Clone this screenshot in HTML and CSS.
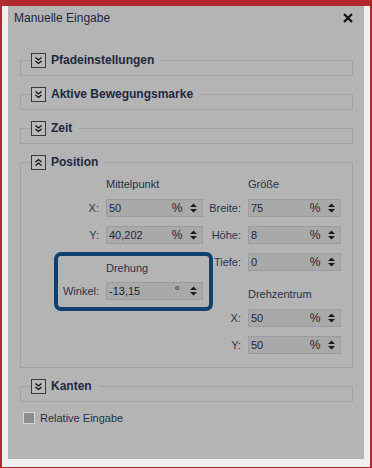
FILE: index.html
```html
<!DOCTYPE html>
<html lang="de">
<head>
<meta charset="utf-8">
<title>Manuelle Eingabe</title>
<link rel="stylesheet" href="styles.css">
</head>
<body>
<div class="window">
  <div class="panel">
    <div class="titlebar">
      <span class="title">Manuelle Eingabe</span>
      <svg class="close" width="10" height="10" viewBox="0 0 10 10"><path d="M1 1L9 9M9 1L1 9" stroke="#111" stroke-width="2.2" fill="none"/></svg>
    </div>

    <fieldset class="group">
      <legend class="legend">
        <span class="expander"><svg width="13" height="13" viewBox="0 0 13 13"><path d="M3.5 3.5L6.5 6L9.5 3.5M3.5 7L6.5 9.5L9.5 7" stroke="#111" stroke-width="1.3" fill="none"/></svg></span>
        <span class="gtitle">Pfadeinstellungen</span>
      </legend>
    </fieldset>

    <fieldset class="group">
      <legend class="legend">
        <span class="expander"><svg width="13" height="13" viewBox="0 0 13 13"><path d="M3.5 3.5L6.5 6L9.5 3.5M3.5 7L6.5 9.5L9.5 7" stroke="#111" stroke-width="1.3" fill="none"/></svg></span>
        <span class="gtitle">Aktive Bewegungsmarke</span>
      </legend>
    </fieldset>

    <fieldset class="group">
      <legend class="legend">
        <span class="expander"><svg width="13" height="13" viewBox="0 0 13 13"><path d="M3.5 3.5L6.5 6L9.5 3.5M3.5 7L6.5 9.5L9.5 7" stroke="#111" stroke-width="1.3" fill="none"/></svg></span>
        <span class="gtitle">Zeit</span>
      </legend>
    </fieldset>

    <fieldset class="group">
      <legend class="legend">
        <span class="expander"><svg width="13" height="13" viewBox="0 0 13 13"><path d="M3.5 6L6.5 3.5L9.5 6M3.5 9.5L6.5 7L9.5 9.5" stroke="#111" stroke-width="1.3" fill="none"/></svg></span>
        <span class="gtitle">Position</span>
      </legend>
      <div class="pos-body">
        <div class="col col-left">
          <div class="sect sect-l">
            <span class="stitle">Mittelpunkt</span>
            <span class="lbl">X:</span>
            <div class="field"><span class="val">50</span><span class="unit">%</span><svg class="spin" width="9" height="12" viewBox="0 0 9 12"><path d="M1 5L4.5 1.5L8 5Z M1 7L8 7L4.5 10.5Z" fill="#1a1a1a"/></svg></div>
            <span class="lbl">Y:</span>
            <div class="field"><span class="val">40,202</span><span class="unit">%</span><svg class="spin" width="9" height="12" viewBox="0 0 9 12"><path d="M1 5L4.5 1.5L8 5Z M1 7L8 7L4.5 10.5Z" fill="#1a1a1a"/></svg></div>
          </div>
          <div class="sect sect-l hl">
            <span class="stitle">Drehung</span>
            <span class="lbl">Winkel:</span>
            <div class="field"><span class="val">-13,15</span><span class="unit deg">°</span><svg class="spin" width="9" height="12" viewBox="0 0 9 12"><path d="M1 5L4.5 1.5L8 5Z M1 7L8 7L4.5 10.5Z" fill="#1a1a1a"/></svg></div>
          </div>
        </div>
        <div class="col col-right">
          <div class="sect sect-r">
            <span class="stitle">Größe</span>
            <span class="lbl">Breite:</span>
            <div class="field"><span class="val">75</span><span class="unit">%</span><svg class="spin" width="9" height="12" viewBox="0 0 9 12"><path d="M1 5L4.5 1.5L8 5Z M1 7L8 7L4.5 10.5Z" fill="#1a1a1a"/></svg></div>
            <span class="lbl">Höhe:</span>
            <div class="field"><span class="val">8</span><span class="unit">%</span><svg class="spin" width="9" height="12" viewBox="0 0 9 12"><path d="M1 5L4.5 1.5L8 5Z M1 7L8 7L4.5 10.5Z" fill="#1a1a1a"/></svg></div>
            <span class="lbl">Tiefe:</span>
            <div class="field"><span class="val">0</span><span class="unit">%</span><svg class="spin" width="9" height="12" viewBox="0 0 9 12"><path d="M1 5L4.5 1.5L8 5Z M1 7L8 7L4.5 10.5Z" fill="#1a1a1a"/></svg></div>
          </div>
          <div class="sect sect-r">
            <span class="stitle">Drehzentrum</span>
            <span class="lbl">X:</span>
            <div class="field"><span class="val">50</span><span class="unit">%</span><svg class="spin" width="9" height="12" viewBox="0 0 9 12"><path d="M1 5L4.5 1.5L8 5Z M1 7L8 7L4.5 10.5Z" fill="#1a1a1a"/></svg></div>
            <span class="lbl">Y:</span>
            <div class="field"><span class="val">50</span><span class="unit">%</span><svg class="spin" width="9" height="12" viewBox="0 0 9 12"><path d="M1 5L4.5 1.5L8 5Z M1 7L8 7L4.5 10.5Z" fill="#1a1a1a"/></svg></div>
          </div>
        </div>
      </div>
    </fieldset>

    <fieldset class="group">
      <legend class="legend">
        <span class="expander"><svg width="13" height="13" viewBox="0 0 13 13"><path d="M3.5 3.5L6.5 6L9.5 3.5M3.5 7L6.5 9.5L9.5 7" stroke="#111" stroke-width="1.3" fill="none"/></svg></span>
        <span class="gtitle">Kanten</span>
      </legend>
    </fieldset>

    <label class="check"><span class="box"></span><span class="check-text">Relative Eingabe</span></label>
  </div>
</div>
</body>
</html>
```

FILE: styles.css
```css
* { box-sizing: border-box; }
html, body { margin: 0; padding: 0; }
body {
  width: 372px;
  height: 468px;
  font-family: "Liberation Sans", Arial, sans-serif;
  font-size: 11px;
  color: #263048;
  overflow: hidden;
}
.window {
  width: 372px;
  height: 468px;
  background: #f0f0f0;
  border-style: solid;
  border-color: #b1292d;
  border-width: 6px 2px 1px 2px;
  padding: 0 6px 8px 6px;
}
.panel {
  height: 453px;
  background: #b4b4b4;
  display: flex;
  flex-direction: column;
}
.titlebar {
  height: 24px;
  display: flex;
  align-items: center;
  justify-content: space-between;
  padding: 0 11px 0 6px;
}
.title {
  font-size: 12px;
  color: #1d2640;
}
.close { display: block; }
.group {
  margin: 22px 11px 0 12px;
  padding: 0 0 7px 0;
  border: 1px solid #a3a3a3;
  min-width: 0;
}
.group + .group { margin-top: 10px; }
.legend {
  display: flex;
  align-items: center;
  gap: 5px;
  height: 16px;
  margin-left: 10px;
  padding: 0 7px 0 0;
}
.expander {
  width: 15px;
  height: 15px;
  border: 1px solid #3a3a3a;
  background: #b9b9b9;
  display: flex;
  align-items: center;
  justify-content: center;
}
.expander svg { display: block; }
.gtitle {
  font-weight: bold;
  font-size: 12px;
  color: #1e2940;
}
.pos-body {
  display: flex;
  align-items: flex-start;
  padding: 5px 0 6px 33px;
}
.col { display: flex; flex-direction: column; }
.col-left { width: 159px; margin-right: -8px; }
.col-right { gap: 14px; }
.sect {
  display: grid;
  column-gap: 7px;
  row-gap: 9px;
  align-items: center;
}
.sect-l {
  grid-template-columns: 41px 97px;
  padding: 0 10px 0 4px;
}
.sect-r { grid-template-columns: 36px 93px; }
.sect.hl {
  margin-top: 8px;
  border: 4px solid #0f416e;
  border-radius: 7px;
  padding: 3px 6px 7px 0;
  row-gap: 5px;
}
.stitle {
  grid-column: 2;
  line-height: 18px;
  margin-bottom: -3px;
  color: #263048;
}
.hl .stitle { margin-bottom: 0; }
.lbl {
  grid-column: 1;
  text-align: right;
  white-space: nowrap;
  line-height: 18px;
  color: #2a3550;
}
.sect-r .lbl { justify-self: end; }
.field {
  grid-column: 2;
  height: 18px;
  display: flex;
  align-items: center;
  background: #a9a9a9;
  border: 1px solid #9c9c9c;
  padding-left: 2px;
  color: #1e2538;
}
.val { flex: 1; }
.unit {
  width: 14px;
  text-align: center;
  font-size: 12px;
}
.unit.deg { font-size: 13px; line-height: 16px; height: 16px; }
.spin { margin: 0 4px 0 5px; display: block; }
.check {
  display: flex;
  align-items: center;
  gap: 5px;
  margin: 10px 0 0 15px;
}
.box {
  width: 12px;
  height: 12px;
  border: 1px solid #d4d4d4;
  background: #8d8d8d;
}
.check-text { color: #263048; }
```
